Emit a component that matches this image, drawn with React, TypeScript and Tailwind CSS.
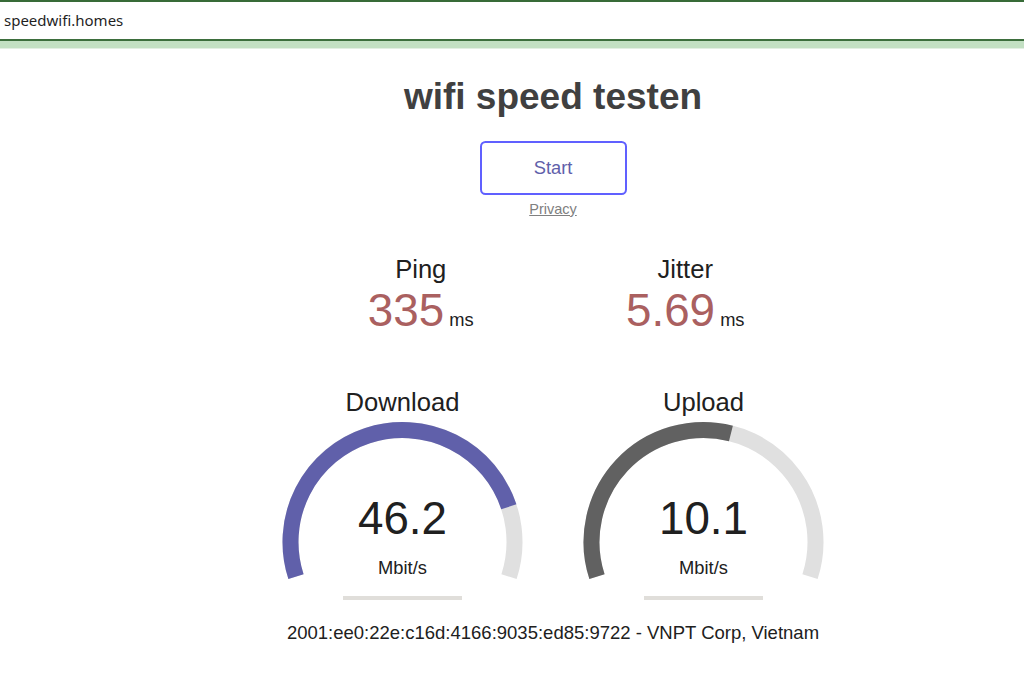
import React from "react";

const R = 112;
const START = -198;
const END = 18;

function pt(cx: number, cy: number, deg: number) {
  const a = (deg * Math.PI) / 180;
  return [cx + R * Math.cos(a), cy + R * Math.sin(a)];
}

function arcPath(cx: number, cy: number, from: number, to: number) {
  const [x1, y1] = pt(cx, cy, from);
  const [x2, y2] = pt(cx, cy, to);
  const large = to - from > 180 ? 1 : 0;
  return `M ${x1} ${y1} A ${R} ${R} 0 ${large} 1 ${x2} ${y2}`;
}

function amount(s: number) {
  return 1 - 1 / Math.pow(1.3, Math.sqrt(s));
}

function Gauge({ label, value, color }: { label: string; value: string; color: string }) {
  const cx = 150.5;
  const cy = 125;
  const frac = amount(parseFloat(value));
  const endDeg = START + (END - START) * frac;
  return (
    <div className="w-[301px] flex flex-col items-center">
      <div className="text-[25.6px] leading-[30px] text-[#202020]">{label}</div>
      <div className="relative w-[301px] h-[190px] flex flex-col items-center">
        <svg className="absolute left-0 top-0" width="301" height="190" viewBox="0 0 301 190">
          <path d={arcPath(cx, cy, START, END)} stroke="#E0E0E0" strokeWidth="16" fill="none" />
          <path d={arcPath(cx, cy, START, endDeg)} stroke={color} strokeWidth="16" fill="none" />
        </svg>
        <div className="relative mt-[78px] text-[45.75px] leading-[48px] text-[#202020]">{value}</div>
        <div className="relative mt-[13.5px] text-[18.3px] leading-[22px] text-[#202020]">Mbit/s</div>
        <div className="relative mt-[17.3px] w-[119px] h-[4px] bg-[#e0deda]" />
      </div>
    </div>
  );
}

function Stat({ label, value }: { label: string; value: string }) {
  return (
    <div className="w-[264.5px] flex flex-col items-center">
      <div className="text-[25.6px] leading-[30px] text-[#202020]">{label}</div>
      <div className="text-[45.75px] leading-[54px] text-[#AA6060] whitespace-nowrap">
        {value}
        <span className="text-[18.3px] text-[#202020]"> ms</span>
      </div>
    </div>
  );
}

export default function App() {
  return (
    <div className="w-[1024px] h-[682px] bg-white overflow-hidden font-['Liberation_Sans',Arial,sans-serif]">
      <div className="h-[2px] bg-[#386b38]" />
      <div className="h-[37px] flex items-center pl-[4px] font-['Noto_Sans',sans-serif] text-[15px] text-[#1f1f1f]">
        speedwifi.homes
      </div>
      <div className="h-[2px] bg-[#3d6e3d]" />
      <div className="h-[7px] bg-[#c3e0c3]" />
      <div className="h-px bg-[#e3efe3]" />
      <div className="flex flex-col items-center pl-[82px]">
        <h1 className="mt-[27px] text-[37px] leading-[42px] font-bold text-[#404040]">wifi speed testen</h1>
        <div className="mt-[23px] w-[147px] h-[54px] border-[2.5px] border-[#6060FF] rounded-[5.5px] flex items-center justify-center text-[18.3px] text-[#6060AA]">
          Start
        </div>
        <div className="mt-[5px] text-[14.5px] leading-[18px] text-[#808080] underline">Privacy</div>
        <div className="mt-[36px] flex">
          <Stat label="Ping" value="335" />
          <Stat label="Jitter" value="5.69" />
        </div>
        <div className="mt-[40px] flex">
          <Gauge label="Download" value="46.2" color="#6060AA" />
          <Gauge label="Upload" value="10.1" color="#616161" />
        </div>
        <div className="mt-[14.5px] text-[18.5px] leading-[22px] text-[#202020]">
          2001:ee0:22e:c16d:4166:9035:ed85:9722 - VNPT Corp, Vietnam
        </div>
      </div>
    </div>
  );
}
